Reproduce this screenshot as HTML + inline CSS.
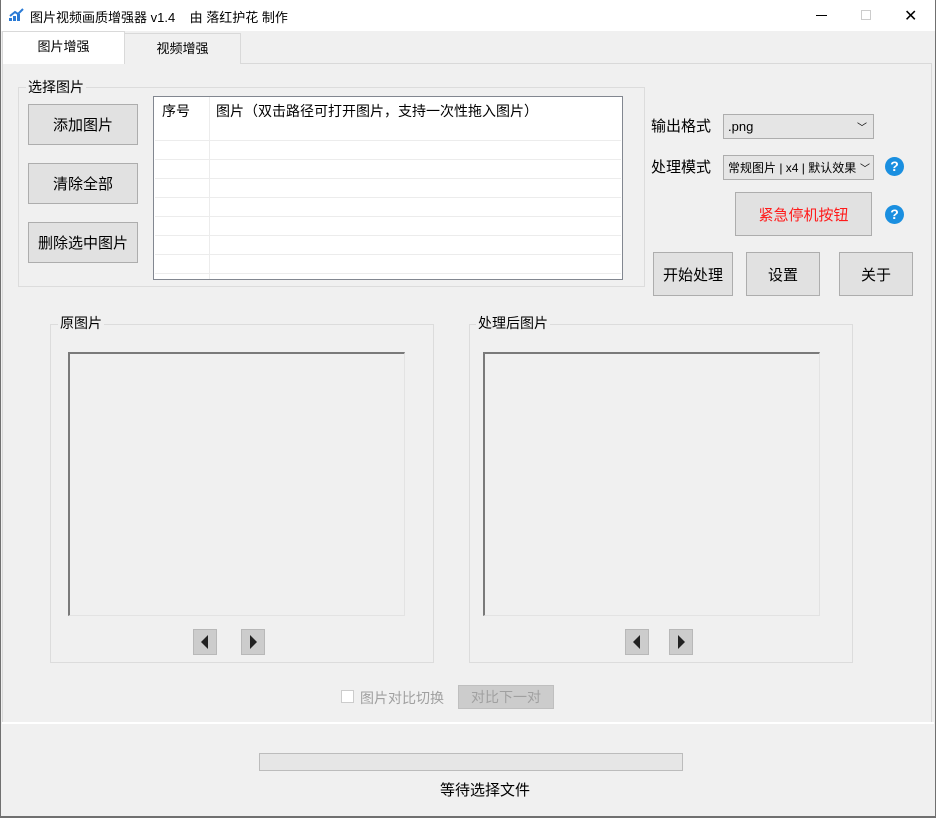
<!DOCTYPE html>
<html><head><meta charset="utf-8"><style>
*{margin:0;padding:0;box-sizing:border-box}
body{width:936px;height:818px;overflow:hidden;background:#f0f0f0;font-family:"Liberation Sans","Noto Sans CJK SC","WenQuanYi Zen Hei",sans-serif;color:#000;position:relative}
.a{position:absolute}
.btn{position:absolute;background:#e1e1e1;border:1px solid #adadad;font-size:15px;display:flex;align-items:center;justify-content:center}
.gb{position:absolute;border:1px solid #dcdcdc}
.gl{position:absolute;background:#f0f0f0;font-size:14px;padding:0 2px;line-height:16px}
.sel{position:absolute;background:#e5e5e5;border:1px solid #adadad;font-size:13px;padding-left:4px;display:flex;align-items:center}
.q{position:absolute;width:19px;height:19px;border-radius:50%;background:#1a8fe0;color:#fff;font-weight:bold;font-size:14px;text-align:center;line-height:19px}
.arr{position:absolute;width:24px;height:26px;background:#cccccc;border:1px solid #b8b8b8}
.hl{position:absolute;left:1px;right:1px;height:1px;background:#ececec}
</style></head><body>
<div class="a" style="left:0;top:0;width:936px;height:31px;background:#fff"></div>
<div class="a" style="left:0;top:0;width:1px;height:818px;background:#707070"></div>
<div class="a" style="left:935px;top:0;width:1px;height:818px;background:#707070"></div>
<svg class="a" style="left:9px;top:8px" width="16" height="14"><rect x="0" y="10" width="3" height="3" fill="#2a7ad5"/><rect x="4" y="8" width="3" height="5" fill="#2a7ad5"/><rect x="8" y="6" width="3" height="7" fill="#2a7ad5"/><path d="M1 8 L6 4 L9 6 L14 1" stroke="#2a7ad5" stroke-width="2" fill="none"/></svg>
<div class="a" style="left:30px;top:7px;font-size:13px">图片视频画质增强器 v1.4 &nbsp;&nbsp;&nbsp;由 落红护花 制作</div>
<div class="a" style="left:816px;top:15px;width:11px;height:1px;background:#000"></div>
<div class="a" style="left:861px;top:10px;width:10px;height:10px;border:1px solid #ccc"></div>
<div class="a" style="left:904px;top:6px;font-size:16px">✕</div>
<!-- tab panel -->
<div class="a" style="left:2px;top:63px;width:930px;height:660px;border:1px solid #d9d9d9;background:#f0f0f0"></div>
<div class="a" style="left:124px;top:33px;width:117px;height:31px;border:1px solid #d9d9d9;border-bottom:none;background:#f0f0f0;font-size:13px;text-align:center;line-height:30px">视频增强</div>
<div class="a" style="left:2px;top:31px;width:123px;height:34px;border:1px solid #d9d9d9;border-bottom:none;background:#fff;font-size:13px;text-align:center;line-height:30px">图片增强</div>
<div class="a" style="left:3px;top:64px;width:928px;height:658px;background:#f0f0f0"></div>
<!-- select group -->
<div class="gb" style="left:18px;top:87px;width:627px;height:200px"></div>
<div class="gl" style="left:26px;top:79px">选择图片</div>
<div class="btn" style="left:28px;top:104px;width:110px;height:41px">添加图片</div>
<div class="btn" style="left:28px;top:163px;width:110px;height:41px">清除全部</div>
<div class="btn" style="left:28px;top:222px;width:110px;height:41px">删除选中图片</div>
<div class="a" style="left:153px;top:96px;width:470px;height:184px;background:#fff;border:1px solid #828790">
 <div class="a" style="left:55px;top:0;width:1px;height:182px;background:#ececec"></div>
 <div class="a" style="left:8px;top:4px;font-size:14px">序号</div>
 <div class="a" style="left:62px;top:4px;font-size:14px">图片（双击路径可打开图片，支持一次性拖入图片）</div>
 <div class="hl" style="top:43px"></div><div class="hl" style="top:62px"></div><div class="hl" style="top:81px"></div><div class="hl" style="top:100px"></div><div class="hl" style="top:119px"></div><div class="hl" style="top:138px"></div><div class="hl" style="top:157px"></div><div class="hl" style="top:176px"></div>
</div>
<!-- right -->
<div class="a" style="left:651px;top:115px;font-size:15px">输出格式</div>
<div class="sel" style="left:723px;top:114px;width:151px;height:25px">.png<span style="position:absolute;right:6px;font-size:10px">﹀</span></div>
<div class="a" style="left:651px;top:156px;font-size:15px">处理模式</div>
<div class="sel" style="left:723px;top:155px;width:151px;height:25px;font-size:12px;overflow:hidden;white-space:nowrap">常规图片 | x4 | 默认效果<span style="position:absolute;right:0;width:16px;background:#e5e5e5;font-size:10px;text-align:center">﹀</span></div>
<div class="q" style="left:885px;top:157px">?</div>
<div class="btn" style="left:735px;top:192px;width:137px;height:44px;color:#ff1a1a">紧急停机按钮</div>
<div class="q" style="left:885px;top:205px">?</div>
<div class="btn" style="left:653px;top:252px;width:80px;height:44px">开始处理</div>
<div class="btn" style="left:746px;top:252px;width:74px;height:44px">设置</div>
<div class="btn" style="left:839px;top:252px;width:74px;height:44px">关于</div>
<!-- image groups -->
<div class="gb" style="left:50px;top:324px;width:384px;height:339px"></div>
<div class="gl" style="left:58px;top:315px">原图片</div>
<div class="a" style="left:68px;top:352px;width:337px;height:264px;border-top:2px solid #7a7a7a;border-left:2px solid #7a7a7a;border-right:1px solid #e3e3e3;border-bottom:1px solid #e3e3e3"></div>
<div class="arr" style="left:193px;top:629px"><svg width="22" height="24"><path d="M14 5 L7 12 L14 19Z" fill="#222"/></svg></div>
<div class="arr" style="left:241px;top:629px"><svg width="22" height="24"><path d="M8 5 L15 12 L8 19Z" fill="#222"/></svg></div>
<div class="gb" style="left:469px;top:324px;width:384px;height:339px"></div>
<div class="gl" style="left:476px;top:315px">处理后图片</div>
<div class="a" style="left:483px;top:352px;width:337px;height:264px;border-top:2px solid #7a7a7a;border-left:2px solid #7a7a7a;border-right:1px solid #e3e3e3;border-bottom:1px solid #e3e3e3"></div>
<div class="arr" style="left:625px;top:629px"><svg width="22" height="24"><path d="M14 5 L7 12 L14 19Z" fill="#222"/></svg></div>
<div class="arr" style="left:669px;top:629px"><svg width="22" height="24"><path d="M8 5 L15 12 L8 19Z" fill="#222"/></svg></div>
<!-- compare -->
<div class="a" style="left:341px;top:690px;width:13px;height:13px;border:1px solid #ccc;background:#fff"></div>
<div class="a" style="left:360px;top:688px;font-size:14px;color:#a0a0a0">图片对比切换</div>
<div class="a" style="left:458px;top:685px;width:96px;height:24px;background:#cccccc;border:1px solid #bfbfbf;color:#a0a0a0;font-size:14px;text-align:center;line-height:22px">对比下一对</div>
<div class="a" style="left:2px;top:722px;width:932px;height:2px;background:#fff"></div>
<!-- progress -->
<div class="a" style="left:259px;top:753px;width:424px;height:18px;background:#e6e6e6;border:1px solid #bcbcbc"></div>
<div class="a" style="left:440px;top:779px;font-size:15px">等待选择文件</div>
<div class="a" style="left:0;top:816px;width:936px;height:2px;background:#707070"></div>
</body></html>
